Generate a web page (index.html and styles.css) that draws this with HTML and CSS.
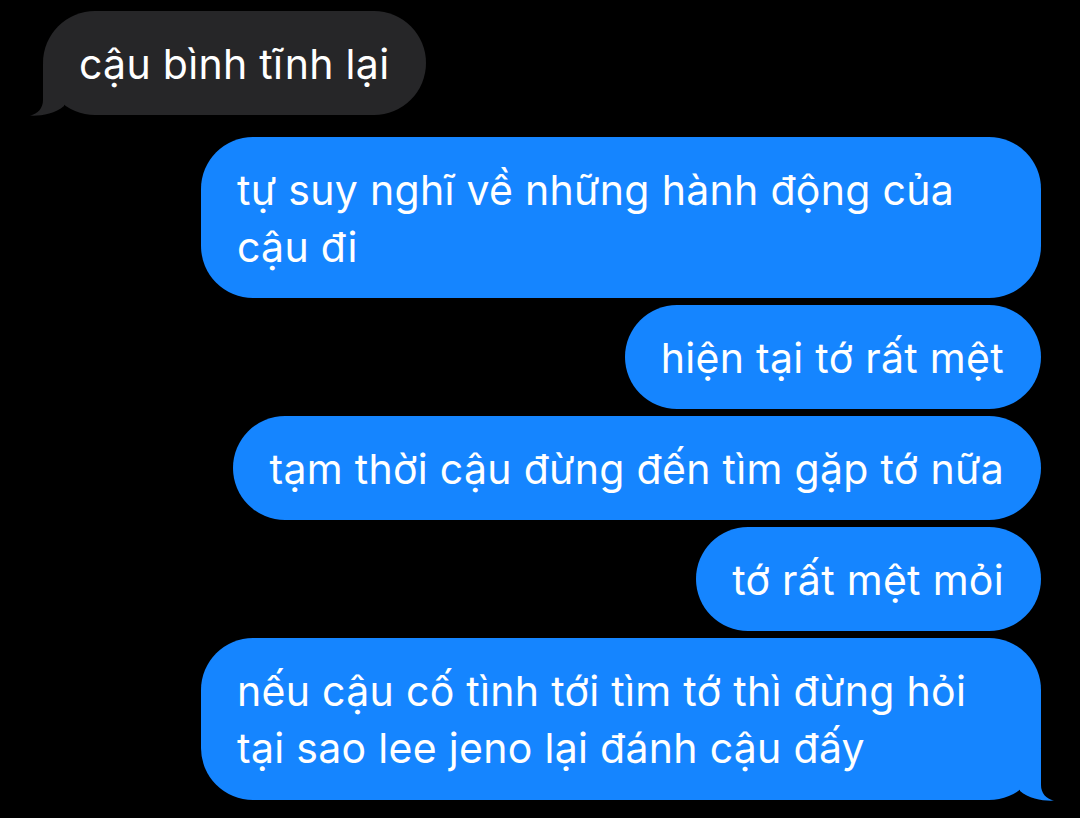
FILE: index.html
```html
<!DOCTYPE html>
<html lang="vi">
<head>
<meta charset="utf-8">
<title>Tin nhắn</title>
<link rel="stylesheet" href="styles.css">
</head>
<body>
<main class="thread">
  <div class="bubble received tail">
    <span class="text">cậu bình tĩnh lại</span>
    <svg class="tail-shape" viewBox="-22 -51 36 52" width="36" height="52" aria-hidden="true"><path d="M0,-51 L0,-15 C0,-7 5,-1 13,0.6 C3,1.2 -12,-1 -21,-9 L-21,-51 Z"/></svg>
  </div>
  <div class="bubble sent first">
    <span class="text">tự suy nghĩ về những hành động của<br>cậu đi</span>
  </div>
  <div class="bubble sent">
    <span class="text">hiện tại tớ rất mệt</span>
  </div>
  <div class="bubble sent">
    <span class="text">tạm thời cậu đừng đến tìm gặp tớ nữa</span>
  </div>
  <div class="bubble sent">
    <span class="text">tớ rất mệt mỏi</span>
  </div>
  <div class="bubble sent tail">
    <span class="text">nếu cậu cố tình tới tìm tớ thì đừng hỏi<br>tại sao lee jeno lại đánh cậu đấy</span>
    <svg class="tail-shape" viewBox="-22 -51 36 52" width="36" height="52" aria-hidden="true"><path d="M0,-51 L0,-15 C0,-7 5,-1 13,0.6 C3,1.2 -12,-1 -21,-9 L-21,-51 Z"/></svg>
  </div>
</main>
</body>
</html>
```
FILE: styles.css
```css
html, body {
  margin: 0;
  padding: 0;
  background: #000;
}

body {
  width: 1080px;
  height: 818px;
  overflow: hidden;
  font-family: Inter, "Noto Sans", "Liberation Sans", sans-serif;
  color: #fff;
}

.thread {
  display: flex;
  flex-direction: column;
  gap: 7px;
  padding: 11px 39px 0 43px;
}

.bubble {
  position: relative;
  box-sizing: border-box;
  padding: 25px 37px 22px 36px;
  border-radius: 52px;
  font-size: 41px;
  line-height: 57px;
  letter-spacing: 0.3px;
  white-space: nowrap;
}

.received {
  align-self: flex-start;
  background: #262628;
}

.sent {
  align-self: flex-end;
  background: #1585ff;
}

.sent.first {
  margin-top: 15px;
  width: 840px;
}

.sent.tail {
  width: 840px;
  padding-bottom: 23px;
}

.tail-shape {
  position: absolute;
  bottom: -1px;
  display: block;
}

.sent .tail-shape {
  right: -14px;
  fill: #1585ff;
}

.received .tail-shape {
  left: -14px;
  fill: #262628;
  transform: scaleX(-1);
}
```
